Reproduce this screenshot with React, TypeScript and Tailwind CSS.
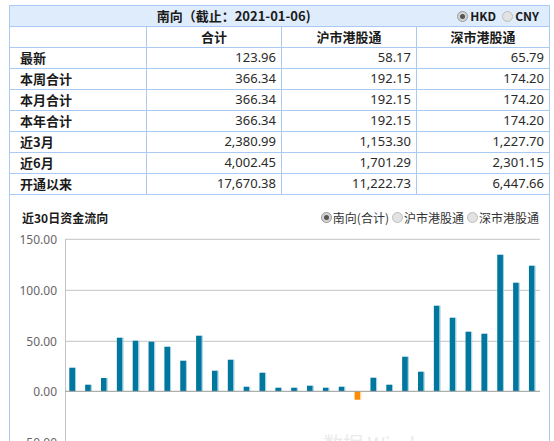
import React from "react";

const rows: [string, string, string, string][] = [
  ["最新", "123.96", "58.17", "65.79"],
  ["本周合计", "366.34", "192.15", "174.20"],
  ["本月合计", "366.34", "192.15", "174.20"],
  ["本年合计", "366.34", "192.15", "174.20"],
  ["近3月", "2,380.99", "1,153.30", "1,227.70"],
  ["近6月", "4,002.45", "1,701.29", "2,301.15"],
  ["开通以来", "17,670.38", "11,222.73", "6,447.66"],
];

const bars = [
  23.6, 6.6, 13.3, 53.6, 50.6, 49.6, 44.6, 30.6, 55.6, 20.6, 31.6, 4.6, 18.6, 3.6, 3.6,
  5.6, 3.6, 4.6, -8.4, 13.6, 6.6, 34.6, 19.6, 85.6, 73.6, 59.6, 57.6, 136.6, 108.6, 125.6,
];

const cjk = { fontFamily: '"Noto Sans CJK SC", "Noto Sans", sans-serif' };
const num = { fontFamily: '"Noto Sans", "Open Sans", sans-serif' };

function Radio({ checked }: { checked?: boolean }) {
  return (
    <span
      className={
        "relative inline-block w-[11px] h-[11px] rounded-full border shrink-0 " +
        (checked ? "border-[#9a9a9a] bg-[#d4d4d4]" : "border-[#bdbdbd] bg-[#e2e2e2]")
      }
    >
      {checked && (
        <span className="absolute left-[2px] top-[2px] w-[5px] h-[5px] rounded-full bg-[#555]" />
      )}
    </span>
  );
}

function Chart() {
  const zero = 391.3;
  const grid = [
    { y: 239.3, label: "150.00" },
    { y: 290.3, label: "100.00" },
    { y: 341.3, label: "50.00" },
    { y: 442.3, label: "-50.00" },
  ];
  return (
    <svg width="539" height="211" className="block">
      <g transform="translate(-10,-230)">
        {grid.map((g) => (
          <line key={g.label} x1="65" x2="540" y1={g.y} y2={g.y} stroke="#c4c4c4" strokeWidth="1" />
        ))}
        {[...grid, { y: zero, label: "0.00" }].map((g) => (
          <text
            key={"t" + g.label}
            x="57"
            y={g.y + 4.5}
            textAnchor="end"
            fontSize="12"
            fill="#666"
            style={num}
          >
            {g.label}
          </text>
        ))}
        <line x1="65.5" x2="65.5" y1="239" y2="460" stroke="#c4c4c4" strokeWidth="1" />
        {bars.map((v, i) => {
          const x = 69.3 + 15.85 * i;
          if (v >= 0) {
            return (
              <g key={i}>
                <rect x={x} y={zero - v} width="5.7" height={v} fill="#00779f" />
                <rect x={x + 5.7} y={zero - v} width="1" height={v} fill="#9fcfe0" />
              </g>
            );
          }
          return (
            <g key={i}>
              <rect x={x} y={zero} width="5.7" height={-v} fill="#ff8c00" />
              <rect x={x + 5.7} y={zero} width="1" height={-v} fill="#ffd09a" />
            </g>
          );
        })}
        <line x1="65" x2="540" y1={zero} y2={zero} stroke="#9a9a9a" strokeWidth="1" />
        <text x="323" y="452" fontSize="20" fill="#ebebeb" style={cjk}>
          数据 Wind
        </text>
      </g>
    </svg>
  );
}

export default function App() {
  return (
    <div className="w-[554px] h-[441px] overflow-hidden bg-white pl-[9px] pt-[5px]">
      <div
        className="w-[541px] h-[460px] border-l border-r border-t border-[#a9caf3] text-[13px] text-[#1a1a1a]"
        style={cjk}
      >
        {/* title row */}
        <div className="flex h-[21px] items-center border-b border-[#a9caf3] bg-[#deecfb]">
          <div className="flex-1 text-center font-bold">南向（截止：2021-01-06)</div>
          <div className="flex items-center gap-[2px] pr-[10px] text-[12px] font-bold">
            <Radio checked />
            <span className="mr-[4px]">HKD</span>
            <Radio />
            <span>CNY</span>
          </div>
        </div>
        {/* column header */}
        <div className="flex h-[21px] border-b border-[#a9caf3]">
          <div className="w-[137px] border-r border-[#a9caf3]" />
          <div className="w-[135px] border-r border-[#a9caf3] flex items-center justify-center font-bold">
            合计
          </div>
          <div className="w-[135px] border-r border-[#a9caf3] flex items-center justify-center font-bold">
            沪市港股通
          </div>
          <div className="w-[132px] flex items-center justify-center font-bold">深市港股通</div>
        </div>
        {rows.map((r) => (
          <div key={r[0]} className="flex h-[21px] border-b border-[#a9caf3]">
            <div className="w-[137px] border-r border-[#a9caf3] flex items-center pl-[10px] font-bold">
              {r[0]}
            </div>
            <div
              className="w-[135px] border-r border-[#a9caf3] flex items-center justify-end pr-[5px] text-[#2a2a2a]"
              style={num}
            >
              {r[1]}
            </div>
            <div
              className="w-[135px] border-r border-[#a9caf3] flex items-center justify-end pr-[5px] text-[#2a2a2a]"
              style={num}
            >
              {r[2]}
            </div>
            <div
              className="w-[132px] flex items-center justify-end pr-[5px] text-[#2a2a2a]"
              style={num}
            >
              {r[3]}
            </div>
          </div>
        ))}
        {/* chart title */}
        <div className="flex h-[35px] items-center pt-[10px] pl-[12px] pr-[10px] text-[12px]">
          <div className="flex-1 font-bold">近30日资金流向</div>
          <div className="flex items-center gap-[1px] text-[#333]">
            <Radio checked />
            <span className="mr-[2px]">南向(合计)</span>
            <Radio />
            <span className="mr-[2px]">沪市港股通</span>
            <Radio />
            <span>深市港股通</span>
          </div>
        </div>
        <Chart />
      </div>
    </div>
  );
}
